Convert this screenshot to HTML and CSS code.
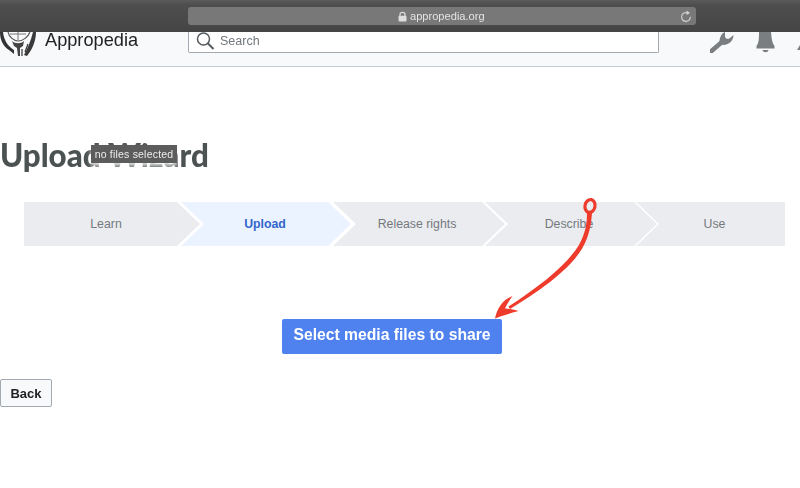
FILE: index.html
```html
<!DOCTYPE html>
<html>
<head>
    <title>Upload Wizard - Appropedia</title>
    <link rel="stylesheet" href="styles.css">
</head>
<body>
    <!-- Browser toolbar -->
    <div class="toolbar">
        <div class="urlbar">
            <div class="url">
                <svg class="lock" width="9" height="11" viewBox="0 0 9 11">
                    <path d="M2,5 V3.4 C2,0.6 7,0.6 7,3.4 V5" fill="none" stroke="#ddd" stroke-width="1.2"/>
                    <rect x="0.5" y="4.8" width="8" height="5.7" rx="1" fill="#ddd"/>
                </svg>
                <span>appropedia.org</span>
            </div>
            <svg class="reload" width="12" height="13" viewBox="0 0 12 13">
                <path d="M7.6,2.9 A4.4,4.4 0 1 0 10.4,6.8" fill="none" stroke="#d4d4d4" stroke-width="1.1"/>
                <path d="M6.6,0.4 L10,2.9 L6.6,5 Z" fill="#d4d4d4"/>
            </svg>
        </div>
    </div>

    <!-- Site header -->
    <header class="site-header">
        <div class="brand">
            <svg class="logo" width="38" height="25" viewBox="0 0 38 25">
                <path d="M8,0 C9,5 14,9 18,9 C23,9 28,5 30,0" fill="none" stroke="#555" stroke-width="1.2"/>
                <path d="M18,0 L18,8 M10,2 L26,2" stroke="#777" stroke-width="1"/>
                <path d="M0,0 C0,8 3,14 9,18 L14,22 L14,18 C8,14 4,9 3,0 Z" fill="#333"/>
                <path d="M12,9 C15,12 21,12 24,9 L23,14 L20,16 L20,24 L18,24 L17,16 L14,14 Z" fill="#444"/>
                <path d="M24,23 C27,17 31,9 33,0 L36,0 C36,9 32,18 27,24 Z" fill="#3a3a3a"/>
                <path d="M22,24 L22,17 M25,20 L28,12" stroke="#333" stroke-width="1.2"/>
            </svg>
            <span class="site-name">Appropedia</span>
        </div>
        <div class="search">
            <svg width="19" height="18" viewBox="0 0 19 18">
                <circle cx="7.5" cy="7" r="6" fill="none" stroke="#54595d" stroke-width="1.5"/>
                <path d="M12,11.5 L17.5,17" stroke="#54595d" stroke-width="1.9"/>
            </svg>
            <span>Search</span>
        </div>
        <div class="header-icons">
            <svg width="24" height="21" viewBox="0 0 24 21">
                <path d="M1.5,19 L12.5,9.5" stroke="#7b7e80" stroke-width="4.6" stroke-linecap="round"/>
                <path d="M9.5,10 C9.5,5 12,1 15,0 L15,4.5 C15.5,7 18,7.500 20,6 L23.5,3 C23.5,8 20,12.5 13,13 Z" fill="#7b7e80"/>
            </svg>
            <svg width="19" height="21" viewBox="0 0 19 21">
                <path d="M3,0 H15 C15.5,6 16,11 18.5,14 V16.5 H0.5 V14 C3,11 3,6 3,0 Z" fill="#7b7e80"/>
                <path d="M6.5,18 H12.5 C12,21 7,21 6.5,18 Z" fill="#7b7e80"/>
            </svg>
            <svg width="8" height="21" viewBox="0 0 8 21">
                <path d="M0,18 L3,13 L6,18 Z" fill="#7b7e80"/>
            </svg>
        </div>
    </header>

    <main class="content">
        <h1 class="page-title">Upload Wizard</h1>

        <ol class="steps">
            <li class="step step-first">Learn</li>
            <li class="step step-active">Upload</li>
            <li class="step step-rights">Release rights</li>
            <li class="step step-describe">Describe</li>
            <li class="step step-last">Use</li>
        </ol>

        <div class="select-row">
            <button class="select-btn">Select media files to share</button>
        </div>

        <button class="back-btn">Back</button>
    </main>

    <div class="tooltip">no files selected</div>

    <!-- Hand drawn arrow -->
    <svg class="arrow" width="120" height="130" viewBox="490 195 120 130">
        <ellipse cx="590" cy="206" rx="5" ry="6.500" fill="none" stroke="#ee3b2b" stroke-width="3.2" transform="rotate(12 590 206)"/>
        <path d="M587,212 L592,212 C591.500,222 590,232 585,243 C578,258 566,269 550,282 C537,292 524,300 510,309 L508.500,306.500 C522,298 535,288 547,279 C562,266 575,254 581.500,240 C586,230 587,222 587,212 Z" fill="#ee3b2b"/>
        <path d="M495,318.500 C497,309 502,300 512.500,296 C509,301 506.500,305 505,308.500 C509,308.500 514,309.500 518.500,311 C511,313 503,315.500 495,318.500 Z" fill="#ee3b2b"/>
    </svg>
</body>
</html>
```

FILE: styles.css
```css
html, body {
    margin: 0;
    height: 488px;
    overflow: hidden;
    background: #fff;
}
body {
    position: relative;
    font-family: "Liberation Sans", Arial, sans-serif;
}
.toolbar {
    height: 32px;
    box-sizing: border-box;
    padding: 7px 104px 0 188px;
    background: linear-gradient(#5a5a5a, #4e4e4e 15%, #454545);
    filter: blur(0.4px);
}
.urlbar {
    height: 18px;
    display: flex;
    align-items: center;
    padding: 0 4px 0 210px;
    background: #787878;
    border-radius: 3px;
}
.url {
    flex: 1;
    display: flex;
    align-items: center;
    gap: 3px;
    color: #e4e4e4;
    font-size: 11.100px;
}
.site-header {
    height: 35px;
    box-sizing: border-box;
    display: flex;
    background: #f8f9fa;
    border-bottom: 1px solid #c8ccd1;
    overflow: hidden;
    filter: blur(0.4px);
}
.brand {
    flex: 0 0 188px;
    display: flex;
    align-items: flex-start;
    gap: 7px;
}
.site-name {
    font-size: 18.200px;
    line-height: 17px;
    color: #222;
}
.search {
    flex: 0 0 471px;
    height: 21px;
    box-sizing: border-box;
    display: flex;
    align-items: flex-start;
    gap: 5px;
    padding-left: 7px;
    background: #fff;
    border: 1px solid #a2a9b1;
    border-top: 0;
    border-radius: 0 0 2px 2px;
    color: #72777d;
    font-size: 12.500px;
    line-height: 18px;
}
.header-icons {
    display: flex;
    align-items: flex-start;
    gap: 22px;
    margin-left: 51px;
}
.content {
    filter: blur(0.4px);
}
.page-title {
    margin: 0;
    padding-top: 67px;
    font-family: Lato, sans-serif;
    font-size: 31.300px;
    line-height: 42px;
    font-weight: 900;
    color: #4c5252;
}
.steps {
    display: flex;
    margin: 26px 0 0 24px;
    padding: 0;
    list-style: none;
}
.step {
    flex: 0 0 172px;
    height: 44px;
    box-sizing: border-box;
    margin-left: -20px;
    display: flex;
    align-items: center;
    justify-content: center;
    background: #eaecf0;
    color: #75797e;
    font-size: 12.300px;
    clip-path: polygon(0 0, calc(100% - 23px) 0, 100% 50%, calc(100% - 23px) 100%, 0 100%, 23px 50%);
}
.step-first {
    flex-basis: 176px;
    margin-left: 0;
    padding-right: 12px;
    clip-path: polygon(0 0, calc(100% - 23px) 0, 100% 50%, calc(100% - 23px) 100%, 0 100%);
}
.step-active {
    flex-basis: 170px;
    margin-left: -19px;
    padding-right: 2px;
    background: #eaf3ff;
    color: #3366cc;
    font-weight: 700;
}
.step-rights {
    margin-left: -18px;
    padding-right: 4px;
}
.step-describe {
    padding-right: 4px;
}
.step-last {
    flex-basis: 149px;
    margin-left: -21px;
    padding-left: 8px;
    clip-path: polygon(0 0, 100% 0, 100% 100%, 0 100%, 23px 50%);
}
.select-row {
    display: flex;
    margin: 73px 0 0 282px;
}
.select-btn {
    width: 220px;
    height: 35px;
    padding: 0 0 3px;
    border: 0;
    border-radius: 2px;
    background: #4f82ee;
    color: #fff;
    font-family: inherit;
    font-size: 15.700px;
    font-weight: 700;
}
.back-btn {
    display: block;
    width: 52px;
    height: 28px;
    margin-top: 25px;
    padding: 0;
    box-sizing: border-box;
    border: 1px solid #a2a9b1;
    border-radius: 2px;
    background: #f8f9fa;
    color: #202122;
    font-family: inherit;
    font-size: 13px;
    font-weight: 700;
}
.tooltip {
    position: absolute;
    left: 91px;
    top: 145px;
    width: 86px;
    height: 18px;
    background: #5c5c5c;
    color: #eee;
    font-size: 10.500px;
    line-height: 18px;
    text-align: center;
    letter-spacing: 0.2px;
    box-shadow: 0 3px 4px rgba(255, 255, 255, 0.85);
    filter: blur(0.3px);
}
.arrow {
    position: absolute;
    left: 490px;
    top: 195px;
}
```
